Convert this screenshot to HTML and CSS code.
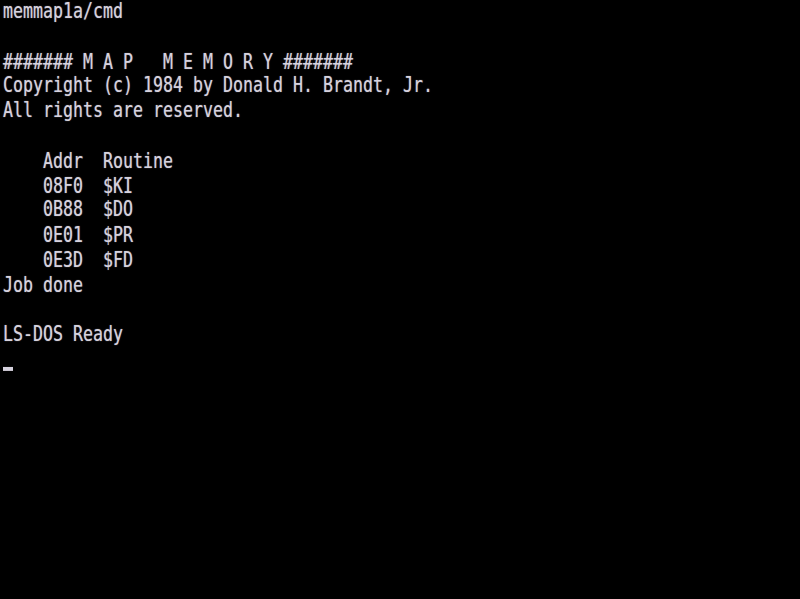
FILE: index.html
```html
<!DOCTYPE html>
<html>
<head>
<meta charset="utf-8">
<link rel="stylesheet" href="styles.css">
</head>
<body>
<div class="screen">
<pre class="term">memmap1a/cmd

####### M A P   M E M O R Y #######
Copyright (c) 1984 by Donald H. Brandt, Jr.
All rights are reserved.

    Addr  Routine
    08F0  $KI
    0B88  $DO
    0E01  $PR
    0E3D  $FD
Job done

LS-DOS Ready
<span class="cursor"></span></pre>
</div>
</body>
</html>
```

FILE: styles.css
```css
html, body {
  margin: 0;
  padding: 0;
  background: #000;
  width: 800px;
  height: 599px;
  overflow: hidden;
}
.screen {
  width: 800px;
  height: 599px;
  background: #000;
  padding: 0 0 0 3px;
  box-sizing: border-box;
}
.term {
  margin: 0;
  font-family: "DejaVu Sans Mono", monospace;
  font-size: 16.61px;
  line-height: 18.8px;
  color: #d6d2de;
  text-shadow: 0 0 1px rgba(214, 210, 222, 0.6);
  transform: scaleY(1.32);
  transform-origin: 0 0;
  white-space: pre;
}
.cursor {
  display: inline-block;
  width: 10px;
  height: 3.2px;
  background: #d6d2de;
  vertical-align: -4px;
}
```
